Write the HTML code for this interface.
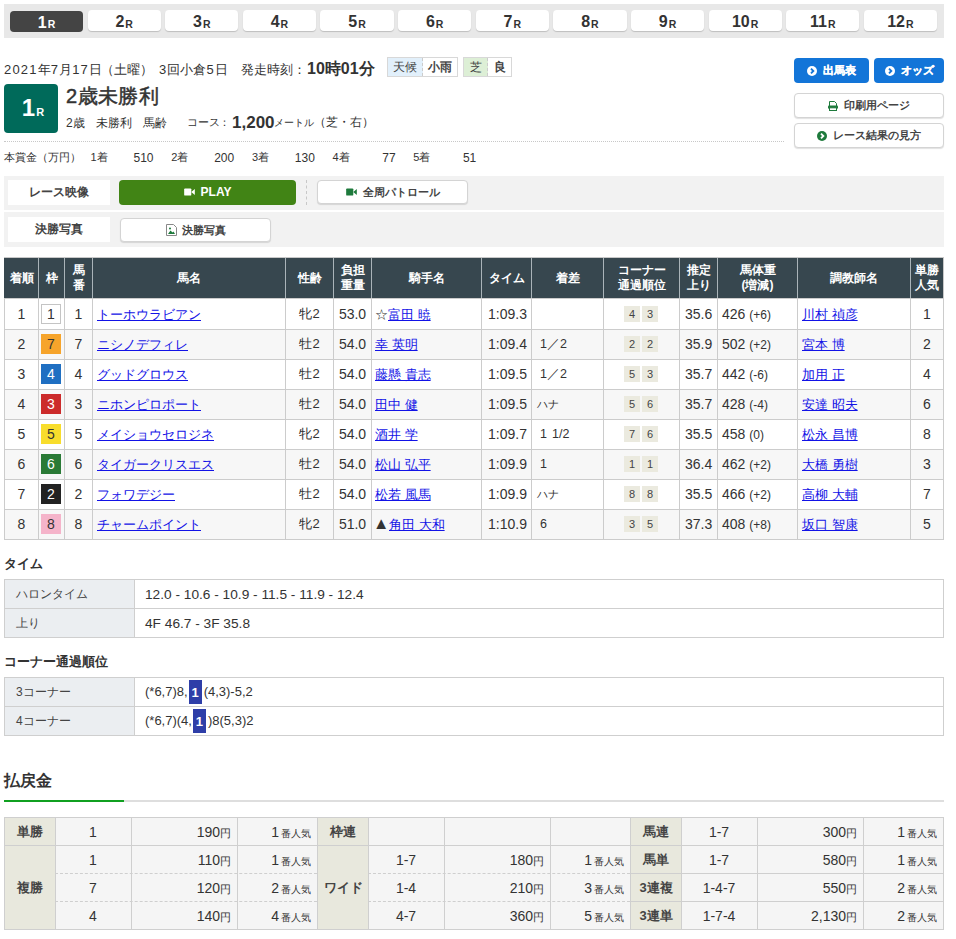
<!DOCTYPE html><html><head><meta charset="utf-8"><style>
*{box-sizing:border-box}
html,body{margin:0;padding:0}
body{width:956px;height:939px;position:relative;overflow:hidden;background:#fff;font-family:"Liberation Sans",sans-serif;color:#333;font-size:13px}
.a{position:absolute}
.t{white-space:nowrap;line-height:1}
.c{display:flex;align-items:center;justify-content:center;white-space:nowrap}
a{color:#1a0dab}
</style></head><body><div class="a" style="left:4px;top:4px;width:940px;height:34px;background:#e8e8e8"></div>
<div class="a" style="left:10.0px;top:11px;width:73.2px;height:21px;background:#444;color:#fff;border-radius:4px;font-weight:bold"><div class="c" style="height:21px;padding-top:2px"><span style="font-size:16px">1</span><span style="font-size:10.5px;margin-left:1px;padding-top:3px">R</span></div></div>
<div class="a" style="left:87.62px;top:10px;width:73.2px;height:21px;background:#fff;color:#333;border-radius:4px;box-shadow:0 1px 1px rgba(0,0,0,.18);font-weight:bold"><div class="c" style="height:21px;padding-top:3px"><span style="font-size:16px">2</span><span style="font-size:10.5px;margin-left:1px;padding-top:3px">R</span></div></div>
<div class="a" style="left:165.24px;top:10px;width:73.2px;height:21px;background:#fff;color:#333;border-radius:4px;box-shadow:0 1px 1px rgba(0,0,0,.18);font-weight:bold"><div class="c" style="height:21px;padding-top:3px"><span style="font-size:16px">3</span><span style="font-size:10.5px;margin-left:1px;padding-top:3px">R</span></div></div>
<div class="a" style="left:242.85px;top:10px;width:73.2px;height:21px;background:#fff;color:#333;border-radius:4px;box-shadow:0 1px 1px rgba(0,0,0,.18);font-weight:bold"><div class="c" style="height:21px;padding-top:3px"><span style="font-size:16px">4</span><span style="font-size:10.5px;margin-left:1px;padding-top:3px">R</span></div></div>
<div class="a" style="left:320.47px;top:10px;width:73.2px;height:21px;background:#fff;color:#333;border-radius:4px;box-shadow:0 1px 1px rgba(0,0,0,.18);font-weight:bold"><div class="c" style="height:21px;padding-top:3px"><span style="font-size:16px">5</span><span style="font-size:10.5px;margin-left:1px;padding-top:3px">R</span></div></div>
<div class="a" style="left:398.09px;top:10px;width:73.2px;height:21px;background:#fff;color:#333;border-radius:4px;box-shadow:0 1px 1px rgba(0,0,0,.18);font-weight:bold"><div class="c" style="height:21px;padding-top:3px"><span style="font-size:16px">6</span><span style="font-size:10.5px;margin-left:1px;padding-top:3px">R</span></div></div>
<div class="a" style="left:475.71px;top:10px;width:73.2px;height:21px;background:#fff;color:#333;border-radius:4px;box-shadow:0 1px 1px rgba(0,0,0,.18);font-weight:bold"><div class="c" style="height:21px;padding-top:3px"><span style="font-size:16px">7</span><span style="font-size:10.5px;margin-left:1px;padding-top:3px">R</span></div></div>
<div class="a" style="left:553.33px;top:10px;width:73.2px;height:21px;background:#fff;color:#333;border-radius:4px;box-shadow:0 1px 1px rgba(0,0,0,.18);font-weight:bold"><div class="c" style="height:21px;padding-top:3px"><span style="font-size:16px">8</span><span style="font-size:10.5px;margin-left:1px;padding-top:3px">R</span></div></div>
<div class="a" style="left:630.95px;top:10px;width:73.2px;height:21px;background:#fff;color:#333;border-radius:4px;box-shadow:0 1px 1px rgba(0,0,0,.18);font-weight:bold"><div class="c" style="height:21px;padding-top:3px"><span style="font-size:16px">9</span><span style="font-size:10.5px;margin-left:1px;padding-top:3px">R</span></div></div>
<div class="a" style="left:708.56px;top:10px;width:73.2px;height:21px;background:#fff;color:#333;border-radius:4px;box-shadow:0 1px 1px rgba(0,0,0,.18);font-weight:bold"><div class="c" style="height:21px;padding-top:3px"><span style="font-size:16px">10</span><span style="font-size:10.5px;margin-left:1px;padding-top:3px">R</span></div></div>
<div class="a" style="left:786.18px;top:10px;width:73.2px;height:21px;background:#fff;color:#333;border-radius:4px;box-shadow:0 1px 1px rgba(0,0,0,.18);font-weight:bold"><div class="c" style="height:21px;padding-top:3px"><span style="font-size:16px">11</span><span style="font-size:10.5px;margin-left:1px;padding-top:3px">R</span></div></div>
<div class="a" style="left:863.8px;top:10px;width:73.2px;height:21px;background:#fff;color:#333;border-radius:4px;box-shadow:0 1px 1px rgba(0,0,0,.18);font-weight:bold"><div class="c" style="height:21px;padding-top:3px"><span style="font-size:16px">12</span><span style="font-size:10.5px;margin-left:1px;padding-top:3px">R</span></div></div>
<div class="a t" style="left:4px;top:63px;font-size:13px"><span style="letter-spacing:1.2px">2021</span>年<span style="letter-spacing:1.2px">7</span>月<span style="letter-spacing:1.2px">17</span>日</div>
<div class="a t" style="left:101.3px;top:63px;font-size:13px">（土曜）</div>
<div class="a t" style="left:159px;top:63px;font-size:13px"><span style="letter-spacing:1.2px">3</span>回小倉<span style="letter-spacing:1.2px">5</span>日</div>
<div class="a t" style="left:241px;top:63px;font-size:13px">発走時刻：</div>
<div class="a t" style="left:307px;top:61px;font-size:16px;font-weight:bold">10時01分</div>
<div class="a" style="left:387px;top:57px;width:71px;height:20px;border:1px solid #d8d8d8;background:#fff"></div>
<div class="a" style="left:388px;top:58px;width:35px;height:18px;background:#e2f0fb;border-right:1px dashed #ccc"><div class="c" style="height:18px;font-size:12px;color:#444;padding-top:1px">天候</div></div>
<div class="a" style="left:423px;top:58px;width:34px;height:18px;"><div class="c" style="height:18px;font-size:12px;-webkit-text-stroke:0.4px #333;color:#333;padding-top:1px">小雨</div></div>
<div class="a" style="left:463px;top:57px;width:49px;height:20px;border:1px solid #d8d8d8;background:#fff"></div>
<div class="a" style="left:464px;top:58px;width:24px;height:18px;background:#ddefd6;border-right:1px dashed #ccc"><div class="c" style="height:18px;font-size:12px;color:#444;padding-top:1px">芝</div></div>
<div class="a" style="left:488px;top:58px;width:23px;height:18px;"><div class="c" style="height:18px;font-size:12px;-webkit-text-stroke:0.4px #333;color:#333;padding-top:1px">良</div></div>
<div class="a" style="left:4px;top:84px;width:54px;height:49px;background:#006a5a;border-radius:4px;color:#fff;font-weight:bold"><div class="c" style="height:49px;padding-bottom:2px;padding-left:4px"><span style="font-size:24px">1</span><span style="font-size:11px;padding-top:8px;margin-left:1px">R</span></div></div>
<div class="a t" style="left:66px;top:86px;font-size:20px;font-weight:normal;-webkit-text-stroke:0.5px #333;color:#333;letter-spacing:0.4px">2歳未勝利</div>
<div class="a t" style="left:66px;top:117px;font-size:12px">2歳</div>
<div class="a t" style="left:95.5px;top:117px;font-size:12px">未勝利</div>
<div class="a t" style="left:142.5px;top:117px;font-size:12px">馬齢</div>
<div class="a t" style="left:187px;top:117px;font-size:11px">コース</div>
<div class="a t" style="left:218.5px;top:117px;font-size:11px">：</div>
<div class="a t" style="left:232px;top:114px;font-size:17px;font-weight:bold">1,200</div>
<div class="a t" style="left:274px;top:118px;font-size:10px">メートル</div>
<div class="a t" style="left:314px;top:116px;font-size:12px">（芝・右）</div>
<div class="a" style="left:4px;top:141px;width:780px;height:1px;border-top:1px dotted #c8c8c8"></div>
<div class="a t" style="left:4px;top:152px;font-size:11px">本賞金（万円）</div>
<div class="a t" style="left:90.5px;top:152px;font-size:11px">1着</div>
<div class="a t" style="left:90.5px;top:152px;width:63px;text-align:right;font-size:12px">510</div>
<div class="a t" style="left:171.2px;top:152px;font-size:11px">2着</div>
<div class="a t" style="left:171.2px;top:152px;width:63px;text-align:right;font-size:12px">200</div>
<div class="a t" style="left:251.9px;top:152px;font-size:11px">3着</div>
<div class="a t" style="left:251.9px;top:152px;width:63px;text-align:right;font-size:12px">130</div>
<div class="a t" style="left:332.6px;top:152px;font-size:11px">4着</div>
<div class="a t" style="left:332.6px;top:152px;width:63px;text-align:right;font-size:12px">77</div>
<div class="a t" style="left:413.3px;top:152px;font-size:11px">5着</div>
<div class="a t" style="left:413.3px;top:152px;width:63px;text-align:right;font-size:12px">51</div>
<div class="a" style="left:794px;top:58px;width:75px;height:25px;background:#1375d8;border-radius:4px;color:#fff;font-weight:bold"><div class="c" style="height:25px;font-size:11px;-webkit-text-stroke:0.3px #fff"><svg width="10" height="10" viewBox="0 0 12 12" style="margin-right:6px"><circle cx="6" cy="6" r="6" fill="#fff"/><path d="M4.8 3.2 L7.6 6 L4.8 8.8" stroke="#1375d8" stroke-width="2.2" fill="none"/></svg>出馬表</div></div>
<div class="a" style="left:874px;top:58px;width:70px;height:25px;background:#1375d8;border-radius:4px;color:#fff;font-weight:bold"><div class="c" style="height:25px;font-size:11px;-webkit-text-stroke:0.3px #fff"><svg width="10" height="10" viewBox="0 0 12 12" style="margin-right:6px"><circle cx="6" cy="6" r="6" fill="#fff"/><path d="M4.8 3.2 L7.6 6 L4.8 8.8" stroke="#1375d8" stroke-width="2.2" fill="none"/></svg>オッズ</div></div>
<div class="a" style="left:794px;top:93px;width:150px;height:25px;background:#fff;border:1px solid #d4d4d4;border-radius:4px;box-shadow:0 1px 1px rgba(0,0,0,.12);font-weight:bold;color:#444"><div class="c" style="height:23px;font-size:11px"><svg width="10" height="10" viewBox="0 0 10 10" style="margin-right:6px"><path d="M1.5 5 V0.5 H6.5 L8.5 2.5 V5" fill="#fff" stroke="#1e7a3c" stroke-width="1"/><rect x="0" y="4.5" width="10" height="3.2" rx="1" fill="#1e7a3c"/><rect x="1.5" y="6.8" width="7" height="2.7" fill="#fff" stroke="#1e7a3c" stroke-width="1"/></svg>印刷用ページ</div></div>
<div class="a" style="left:794px;top:123px;width:150px;height:25px;background:#fff;border:1px solid #d4d4d4;border-radius:4px;box-shadow:0 1px 1px rgba(0,0,0,.12);font-weight:bold;color:#444"><div class="c" style="height:23px;font-size:11px"><svg width="10" height="10" viewBox="0 0 12 12" style="margin-right:6px"><circle cx="6" cy="6" r="6" fill="#1e7a3c"/><path d="M4.8 3.2 L7.6 6 L4.8 8.8" stroke="#fff" stroke-width="2.2" fill="none"/></svg>レース結果の見方</div></div>
<div class="a" style="left:4px;top:176px;width:940px;height:34px;background:#f2f2f2"></div>
<div class="a" style="left:8px;top:180px;width:102px;height:25px;background:#fff"><div class="c" style="height:25px;font-size:12px;font-weight:bold;color:#444">レース映像</div></div>
<div class="a" style="left:119px;top:180px;width:177px;height:25px;background:#418415;border-radius:4px;color:#fff;font-weight:bold"><div class="c" style="height:25px;font-size:12px;padding-bottom:1px"><svg width="11" height="8" viewBox="0 0 12 9" style="margin-right:6px"><rect x="0" y="0.5" width="8" height="8" rx="1" fill="#fff"/><path d="M8 4.5 L12 1 L12 8 Z" fill="#fff"/></svg>PLAY</div></div>
<div class="a" style="left:306px;top:180px;width:1px;height:25px;border-left:1px dashed #c8c8c8"></div>
<div class="a" style="left:317px;top:180px;width:151px;height:24px;background:#fff;border:1px solid #d4d4d4;border-radius:4px;box-shadow:0 1px 1px rgba(0,0,0,.12);font-weight:bold;color:#444"><div class="c" style="height:22px;font-size:11px"><svg width="11" height="8" viewBox="0 0 12 9" style="margin-right:6px"><rect x="0" y="0.5" width="8" height="8" rx="1" fill="#1e7a3c"/><path d="M8 4.5 L12 1 L12 8 Z" fill="#1e7a3c"/></svg>全周パトロール</div></div>
<div class="a" style="left:4px;top:212px;width:940px;height:35px;background:#f2f2f2"></div>
<div class="a" style="left:8px;top:217px;width:102px;height:25px;background:#fff"><div class="c" style="height:25px;font-size:12px;font-weight:bold;color:#444">決勝写真</div></div>
<div class="a" style="left:120px;top:218px;width:151px;height:24px;background:#fff;border:1px solid #d4d4d4;border-radius:4px;box-shadow:0 1px 1px rgba(0,0,0,.12);font-weight:bold;color:#444"><div class="c" style="height:22px;font-size:11px"><svg width="11" height="12" viewBox="0 0 11 12" style="margin-right:5px"><path d="M0.5 0.5 H7.5 L10.5 3.5 V11.5 H0.5 Z" fill="#fff" stroke="#888" stroke-width="1"/><path d="M2 10 L4.5 6.5 L6.5 8.5 L7.5 7.5 L9 10 Z" fill="#1e7a3c"/><circle cx="4" cy="4.5" r="1" fill="#1e7a3c"/></svg>決勝写真</div></div>
<div class="a" style="left:4px;top:258px;width:940px;height:40px;background:#37474f"></div>
<div class="a" style="left:4px;top:257px;width:940px;height:1px;background:#c8c8c8"></div>
<div class="a" style="left:943px;top:258px;width:1px;height:40px;background:#c8c8c8"></div>
<div class="a c" style="left:5px;top:258px;width:33px;height:40px;color:#fff;font-weight:bold;font-size:12px;line-height:15px;text-align:center">着順</div>
<div class="a" style="left:38px;top:258px;width:1px;height:40px;background:#aab4b9"></div>
<div class="a c" style="left:39px;top:258px;width:25px;height:40px;color:#fff;font-weight:bold;font-size:12px;line-height:15px;text-align:center">枠</div>
<div class="a" style="left:64px;top:258px;width:1px;height:40px;background:#aab4b9"></div>
<div class="a c" style="left:65px;top:258px;width:27px;height:40px;color:#fff;font-weight:bold;font-size:12px;line-height:15px;text-align:center">馬<br>番</div>
<div class="a" style="left:92px;top:258px;width:1px;height:40px;background:#aab4b9"></div>
<div class="a c" style="left:93px;top:258px;width:192px;height:40px;color:#fff;font-weight:bold;font-size:12px;line-height:15px;text-align:center">馬名</div>
<div class="a" style="left:285px;top:258px;width:1px;height:40px;background:#aab4b9"></div>
<div class="a c" style="left:286px;top:258px;width:47px;height:40px;color:#fff;font-weight:bold;font-size:12px;line-height:15px;text-align:center">性齢</div>
<div class="a" style="left:333px;top:258px;width:1px;height:40px;background:#aab4b9"></div>
<div class="a c" style="left:334px;top:258px;width:37px;height:40px;color:#fff;font-weight:bold;font-size:12px;line-height:15px;text-align:center">負担<br>重量</div>
<div class="a" style="left:371px;top:258px;width:1px;height:40px;background:#aab4b9"></div>
<div class="a c" style="left:372px;top:258px;width:109px;height:40px;color:#fff;font-weight:bold;font-size:12px;line-height:15px;text-align:center">騎手名</div>
<div class="a" style="left:481px;top:258px;width:1px;height:40px;background:#aab4b9"></div>
<div class="a c" style="left:482px;top:258px;width:49px;height:40px;color:#fff;font-weight:bold;font-size:12px;line-height:15px;text-align:center">タイム</div>
<div class="a" style="left:531px;top:258px;width:1px;height:40px;background:#aab4b9"></div>
<div class="a c" style="left:532px;top:258px;width:71px;height:40px;color:#fff;font-weight:bold;font-size:12px;line-height:15px;text-align:center">着差</div>
<div class="a" style="left:603px;top:258px;width:1px;height:40px;background:#aab4b9"></div>
<div class="a c" style="left:604px;top:258px;width:75px;height:40px;color:#fff;font-weight:bold;font-size:12px;line-height:15px;text-align:center">コーナー<br>通過順位</div>
<div class="a" style="left:679px;top:258px;width:1px;height:40px;background:#aab4b9"></div>
<div class="a c" style="left:680px;top:258px;width:37px;height:40px;color:#fff;font-weight:bold;font-size:12px;line-height:15px;text-align:center">推定<br>上り</div>
<div class="a" style="left:717px;top:258px;width:1px;height:40px;background:#aab4b9"></div>
<div class="a c" style="left:718px;top:258px;width:79px;height:40px;color:#fff;font-weight:bold;font-size:12px;line-height:15px;text-align:center">馬体重<br>(増減)</div>
<div class="a" style="left:797px;top:258px;width:1px;height:40px;background:#aab4b9"></div>
<div class="a c" style="left:798px;top:258px;width:112px;height:40px;color:#fff;font-weight:bold;font-size:12px;line-height:15px;text-align:center">調教師名</div>
<div class="a" style="left:910px;top:258px;width:1px;height:40px;background:#aab4b9"></div>
<div class="a c" style="left:911px;top:258px;width:32px;height:40px;color:#fff;font-weight:bold;font-size:12px;line-height:15px;text-align:center">単勝<br>人気</div>
<div class="a" style="left:4px;top:299px;width:940px;height:30px;background:#fff"></div>
<div class="a" style="left:4px;top:330px;width:940px;height:29px;background:#f7f7f7"></div>
<div class="a" style="left:4px;top:360px;width:940px;height:29px;background:#fff"></div>
<div class="a" style="left:4px;top:390px;width:940px;height:29px;background:#f7f7f7"></div>
<div class="a" style="left:4px;top:420px;width:940px;height:29px;background:#fff"></div>
<div class="a" style="left:4px;top:450px;width:940px;height:29px;background:#f7f7f7"></div>
<div class="a" style="left:4px;top:480px;width:940px;height:29px;background:#fff"></div>
<div class="a" style="left:4px;top:510px;width:940px;height:29px;background:#f7f7f7"></div>
<div class="a" style="left:4px;top:298px;width:940px;height:1px;background:#cccccc"></div>
<div class="a" style="left:4px;top:329px;width:940px;height:1px;background:#cccccc"></div>
<div class="a" style="left:4px;top:359px;width:940px;height:1px;background:#cccccc"></div>
<div class="a" style="left:4px;top:389px;width:940px;height:1px;background:#cccccc"></div>
<div class="a" style="left:4px;top:419px;width:940px;height:1px;background:#cccccc"></div>
<div class="a" style="left:4px;top:449px;width:940px;height:1px;background:#cccccc"></div>
<div class="a" style="left:4px;top:479px;width:940px;height:1px;background:#cccccc"></div>
<div class="a" style="left:4px;top:509px;width:940px;height:1px;background:#cccccc"></div>
<div class="a" style="left:4px;top:539px;width:940px;height:1px;background:#cccccc"></div>
<div class="a" style="left:4px;top:298px;width:1px;height:242px;background:#cccccc"></div>
<div class="a" style="left:38px;top:298px;width:1px;height:242px;background:#cccccc"></div>
<div class="a" style="left:64px;top:298px;width:1px;height:242px;background:#cccccc"></div>
<div class="a" style="left:92px;top:298px;width:1px;height:242px;background:#cccccc"></div>
<div class="a" style="left:285px;top:298px;width:1px;height:242px;background:#cccccc"></div>
<div class="a" style="left:333px;top:298px;width:1px;height:242px;background:#cccccc"></div>
<div class="a" style="left:371px;top:298px;width:1px;height:242px;background:#cccccc"></div>
<div class="a" style="left:481px;top:298px;width:1px;height:242px;background:#cccccc"></div>
<div class="a" style="left:531px;top:298px;width:1px;height:242px;background:#cccccc"></div>
<div class="a" style="left:603px;top:298px;width:1px;height:242px;background:#cccccc"></div>
<div class="a" style="left:679px;top:298px;width:1px;height:242px;background:#cccccc"></div>
<div class="a" style="left:717px;top:298px;width:1px;height:242px;background:#cccccc"></div>
<div class="a" style="left:797px;top:298px;width:1px;height:242px;background:#cccccc"></div>
<div class="a" style="left:910px;top:298px;width:1px;height:242px;background:#cccccc"></div>
<div class="a" style="left:943px;top:298px;width:1px;height:242px;background:#cccccc"></div>
<div class="a t" style="left:5px;top:307px;width:33px;text-align:center;font-size:14px;">1</div>
<div class="a" style="left:41px;top:304px;width:20px;height:20px;background:#fff;border:1px solid #c4c4c4"><div class="c" style="height:18px;font-size:14px;color:#333">1</div></div>
<div class="a t" style="left:65px;top:307px;width:27px;text-align:center;font-size:14px;">1</div>
<div class="a t" style="left:97px;top:308px;font-size:13px"><a style="color:#1212e6;text-decoration:underline">トーホウラビアン</a></div>
<div class="a t" style="left:286px;top:307px;width:47px;text-align:center;font-size:14px;font-size:13px">牝2</div>
<div class="a t" style="left:334px;top:307px;width:37px;text-align:center;font-size:14px;">53.0</div>
<div class="a t" style="left:375px;top:308px;font-size:13px">☆<a style="color:#1212e6;text-decoration:underline">富田 暁</a></div>
<div class="a t" style="left:488px;top:307px;font-size:14px">1:09.3</div>
<div class="a t" style="left:540px;top:308px;font-size:12.5px"></div>
<div class="a" style="left:624px;top:306px;width:16px;height:16px;background:#ebeadf"><div class="c" style="height:16px;font-size:11px;color:#444">4</div></div>
<div class="a" style="left:642px;top:306px;width:16px;height:16px;background:#ebeadf"><div class="c" style="height:16px;font-size:11px;color:#444">3</div></div>
<div class="a t" style="left:685px;top:307px;font-size:14px">35.6</div>
<div class="a t" style="left:722px;top:307px;font-size:14px">426 <span style="font-size:12px">(+6)</span></div>
<div class="a t" style="left:802px;top:308px;font-size:13px"><a style="color:#1212e6;text-decoration:underline">川村 禎彦</a></div>
<div class="a t" style="left:911px;top:307px;width:32px;text-align:center;font-size:14px;">1</div>
<div class="a t" style="left:5px;top:337px;width:33px;text-align:center;font-size:14px;">2</div>
<div class="a" style="left:41px;top:334px;width:20px;height:20px;background:#f6a42b;border:none"><div class="c" style="height:20px;font-size:14px;color:#333">7</div></div>
<div class="a t" style="left:65px;top:337px;width:27px;text-align:center;font-size:14px;">7</div>
<div class="a t" style="left:97px;top:338px;font-size:13px"><a style="color:#1212e6;text-decoration:underline">ニシノデフィレ</a></div>
<div class="a t" style="left:286px;top:337px;width:47px;text-align:center;font-size:14px;font-size:13px">牡2</div>
<div class="a t" style="left:334px;top:337px;width:37px;text-align:center;font-size:14px;">54.0</div>
<div class="a t" style="left:375px;top:338px;font-size:13px"><a style="color:#1212e6;text-decoration:underline">幸 英明</a></div>
<div class="a t" style="left:488px;top:337px;font-size:14px">1:09.4</div>
<div class="a t" style="left:540px;top:338px;font-size:12.5px">1／2</div>
<div class="a" style="left:624px;top:336px;width:16px;height:16px;background:#ebeadf"><div class="c" style="height:16px;font-size:11px;color:#444">2</div></div>
<div class="a" style="left:642px;top:336px;width:16px;height:16px;background:#ebeadf"><div class="c" style="height:16px;font-size:11px;color:#444">2</div></div>
<div class="a t" style="left:685px;top:337px;font-size:14px">35.9</div>
<div class="a t" style="left:722px;top:337px;font-size:14px">502 <span style="font-size:12px">(+2)</span></div>
<div class="a t" style="left:802px;top:338px;font-size:13px"><a style="color:#1212e6;text-decoration:underline">宮本 博</a></div>
<div class="a t" style="left:911px;top:337px;width:32px;text-align:center;font-size:14px;">2</div>
<div class="a t" style="left:5px;top:367px;width:33px;text-align:center;font-size:14px;">3</div>
<div class="a" style="left:41px;top:364px;width:20px;height:20px;background:#1f6fc2;border:none"><div class="c" style="height:20px;font-size:14px;color:#fff">4</div></div>
<div class="a t" style="left:65px;top:367px;width:27px;text-align:center;font-size:14px;">4</div>
<div class="a t" style="left:97px;top:368px;font-size:13px"><a style="color:#1212e6;text-decoration:underline">グッドグロウス</a></div>
<div class="a t" style="left:286px;top:367px;width:47px;text-align:center;font-size:14px;font-size:13px">牡2</div>
<div class="a t" style="left:334px;top:367px;width:37px;text-align:center;font-size:14px;">54.0</div>
<div class="a t" style="left:375px;top:368px;font-size:13px"><a style="color:#1212e6;text-decoration:underline">藤懸 貴志</a></div>
<div class="a t" style="left:488px;top:367px;font-size:14px">1:09.5</div>
<div class="a t" style="left:540px;top:368px;font-size:12.5px">1／2</div>
<div class="a" style="left:624px;top:366px;width:16px;height:16px;background:#ebeadf"><div class="c" style="height:16px;font-size:11px;color:#444">5</div></div>
<div class="a" style="left:642px;top:366px;width:16px;height:16px;background:#ebeadf"><div class="c" style="height:16px;font-size:11px;color:#444">3</div></div>
<div class="a t" style="left:685px;top:367px;font-size:14px">35.7</div>
<div class="a t" style="left:722px;top:367px;font-size:14px">442 <span style="font-size:12px">(-6)</span></div>
<div class="a t" style="left:802px;top:368px;font-size:13px"><a style="color:#1212e6;text-decoration:underline">加用 正</a></div>
<div class="a t" style="left:911px;top:367px;width:32px;text-align:center;font-size:14px;">4</div>
<div class="a t" style="left:5px;top:397px;width:33px;text-align:center;font-size:14px;">4</div>
<div class="a" style="left:41px;top:394px;width:20px;height:20px;background:#cc2b2b;border:none"><div class="c" style="height:20px;font-size:14px;color:#fff">3</div></div>
<div class="a t" style="left:65px;top:397px;width:27px;text-align:center;font-size:14px;">3</div>
<div class="a t" style="left:97px;top:398px;font-size:13px"><a style="color:#1212e6;text-decoration:underline">ニホンピロポート</a></div>
<div class="a t" style="left:286px;top:397px;width:47px;text-align:center;font-size:14px;font-size:13px">牡2</div>
<div class="a t" style="left:334px;top:397px;width:37px;text-align:center;font-size:14px;">54.0</div>
<div class="a t" style="left:375px;top:398px;font-size:13px"><a style="color:#1212e6;text-decoration:underline">田中 健</a></div>
<div class="a t" style="left:488px;top:397px;font-size:14px">1:09.5</div>
<div class="a t" style="left:540px;top:398px;font-size:12.5px"><span style="font-size:11px;margin-left:-3px">ハナ</span></div>
<div class="a" style="left:624px;top:396px;width:16px;height:16px;background:#ebeadf"><div class="c" style="height:16px;font-size:11px;color:#444">5</div></div>
<div class="a" style="left:642px;top:396px;width:16px;height:16px;background:#ebeadf"><div class="c" style="height:16px;font-size:11px;color:#444">6</div></div>
<div class="a t" style="left:685px;top:397px;font-size:14px">35.7</div>
<div class="a t" style="left:722px;top:397px;font-size:14px">428 <span style="font-size:12px">(-4)</span></div>
<div class="a t" style="left:802px;top:398px;font-size:13px"><a style="color:#1212e6;text-decoration:underline">安達 昭夫</a></div>
<div class="a t" style="left:911px;top:397px;width:32px;text-align:center;font-size:14px;">6</div>
<div class="a t" style="left:5px;top:427px;width:33px;text-align:center;font-size:14px;">5</div>
<div class="a" style="left:41px;top:424px;width:20px;height:20px;background:#f8dd2c;border:none"><div class="c" style="height:20px;font-size:14px;color:#333">5</div></div>
<div class="a t" style="left:65px;top:427px;width:27px;text-align:center;font-size:14px;">5</div>
<div class="a t" style="left:97px;top:428px;font-size:13px"><a style="color:#1212e6;text-decoration:underline">メイショウセロジネ</a></div>
<div class="a t" style="left:286px;top:427px;width:47px;text-align:center;font-size:14px;font-size:13px">牝2</div>
<div class="a t" style="left:334px;top:427px;width:37px;text-align:center;font-size:14px;">54.0</div>
<div class="a t" style="left:375px;top:428px;font-size:13px"><a style="color:#1212e6;text-decoration:underline">酒井 学</a></div>
<div class="a t" style="left:488px;top:427px;font-size:14px">1:09.7</div>
<div class="a t" style="left:540px;top:428px;font-size:12.5px">1<span style="margin-left:5px">1/2</span></div>
<div class="a" style="left:624px;top:426px;width:16px;height:16px;background:#ebeadf"><div class="c" style="height:16px;font-size:11px;color:#444">7</div></div>
<div class="a" style="left:642px;top:426px;width:16px;height:16px;background:#ebeadf"><div class="c" style="height:16px;font-size:11px;color:#444">6</div></div>
<div class="a t" style="left:685px;top:427px;font-size:14px">35.5</div>
<div class="a t" style="left:722px;top:427px;font-size:14px">458 <span style="font-size:12px">(0)</span></div>
<div class="a t" style="left:802px;top:428px;font-size:13px"><a style="color:#1212e6;text-decoration:underline">松永 昌博</a></div>
<div class="a t" style="left:911px;top:427px;width:32px;text-align:center;font-size:14px;">8</div>
<div class="a t" style="left:5px;top:457px;width:33px;text-align:center;font-size:14px;">6</div>
<div class="a" style="left:41px;top:454px;width:20px;height:20px;background:#2a7a36;border:none"><div class="c" style="height:20px;font-size:14px;color:#fff">6</div></div>
<div class="a t" style="left:65px;top:457px;width:27px;text-align:center;font-size:14px;">6</div>
<div class="a t" style="left:97px;top:458px;font-size:13px"><a style="color:#1212e6;text-decoration:underline">タイガークリスエス</a></div>
<div class="a t" style="left:286px;top:457px;width:47px;text-align:center;font-size:14px;font-size:13px">牡2</div>
<div class="a t" style="left:334px;top:457px;width:37px;text-align:center;font-size:14px;">54.0</div>
<div class="a t" style="left:375px;top:458px;font-size:13px"><a style="color:#1212e6;text-decoration:underline">松山 弘平</a></div>
<div class="a t" style="left:488px;top:457px;font-size:14px">1:09.9</div>
<div class="a t" style="left:540px;top:458px;font-size:12.5px">1</div>
<div class="a" style="left:624px;top:456px;width:16px;height:16px;background:#ebeadf"><div class="c" style="height:16px;font-size:11px;color:#444">1</div></div>
<div class="a" style="left:642px;top:456px;width:16px;height:16px;background:#ebeadf"><div class="c" style="height:16px;font-size:11px;color:#444">1</div></div>
<div class="a t" style="left:685px;top:457px;font-size:14px">36.4</div>
<div class="a t" style="left:722px;top:457px;font-size:14px">462 <span style="font-size:12px">(+2)</span></div>
<div class="a t" style="left:802px;top:458px;font-size:13px"><a style="color:#1212e6;text-decoration:underline">大橋 勇樹</a></div>
<div class="a t" style="left:911px;top:457px;width:32px;text-align:center;font-size:14px;">3</div>
<div class="a t" style="left:5px;top:487px;width:33px;text-align:center;font-size:14px;">7</div>
<div class="a" style="left:41px;top:484px;width:20px;height:20px;background:#222;border:none"><div class="c" style="height:20px;font-size:14px;color:#fff">2</div></div>
<div class="a t" style="left:65px;top:487px;width:27px;text-align:center;font-size:14px;">2</div>
<div class="a t" style="left:97px;top:488px;font-size:13px"><a style="color:#1212e6;text-decoration:underline">フォワデジー</a></div>
<div class="a t" style="left:286px;top:487px;width:47px;text-align:center;font-size:14px;font-size:13px">牡2</div>
<div class="a t" style="left:334px;top:487px;width:37px;text-align:center;font-size:14px;">54.0</div>
<div class="a t" style="left:375px;top:488px;font-size:13px"><a style="color:#1212e6;text-decoration:underline">松若 風馬</a></div>
<div class="a t" style="left:488px;top:487px;font-size:14px">1:09.9</div>
<div class="a t" style="left:540px;top:488px;font-size:12.5px"><span style="font-size:11px;margin-left:-3px">ハナ</span></div>
<div class="a" style="left:624px;top:486px;width:16px;height:16px;background:#ebeadf"><div class="c" style="height:16px;font-size:11px;color:#444">8</div></div>
<div class="a" style="left:642px;top:486px;width:16px;height:16px;background:#ebeadf"><div class="c" style="height:16px;font-size:11px;color:#444">8</div></div>
<div class="a t" style="left:685px;top:487px;font-size:14px">35.5</div>
<div class="a t" style="left:722px;top:487px;font-size:14px">466 <span style="font-size:12px">(+2)</span></div>
<div class="a t" style="left:802px;top:488px;font-size:13px"><a style="color:#1212e6;text-decoration:underline">高柳 大輔</a></div>
<div class="a t" style="left:911px;top:487px;width:32px;text-align:center;font-size:14px;">7</div>
<div class="a t" style="left:5px;top:517px;width:33px;text-align:center;font-size:14px;">8</div>
<div class="a" style="left:41px;top:514px;width:20px;height:20px;background:#f5b4ca;border:none"><div class="c" style="height:20px;font-size:14px;color:#333">8</div></div>
<div class="a t" style="left:65px;top:517px;width:27px;text-align:center;font-size:14px;">8</div>
<div class="a t" style="left:97px;top:518px;font-size:13px"><a style="color:#1212e6;text-decoration:underline">チャームポイント</a></div>
<div class="a t" style="left:286px;top:517px;width:47px;text-align:center;font-size:14px;font-size:13px">牝2</div>
<div class="a t" style="left:334px;top:517px;width:37px;text-align:center;font-size:14px;">51.0</div>
<div class="a t" style="left:373px;top:517px;font-size:16.5px;line-height:13px">▲</div>
<div class="a t" style="left:389px;top:518px;font-size:13px"><a style="color:#1212e6;text-decoration:underline">角田 大和</a></div>
<div class="a t" style="left:488px;top:517px;font-size:14px">1:10.9</div>
<div class="a t" style="left:540px;top:518px;font-size:12.5px">6</div>
<div class="a" style="left:624px;top:516px;width:16px;height:16px;background:#ebeadf"><div class="c" style="height:16px;font-size:11px;color:#444">3</div></div>
<div class="a" style="left:642px;top:516px;width:16px;height:16px;background:#ebeadf"><div class="c" style="height:16px;font-size:11px;color:#444">5</div></div>
<div class="a t" style="left:685px;top:517px;font-size:14px">37.3</div>
<div class="a t" style="left:722px;top:517px;font-size:14px">408 <span style="font-size:12px">(+8)</span></div>
<div class="a t" style="left:802px;top:518px;font-size:13px"><a style="color:#1212e6;text-decoration:underline">坂口 智康</a></div>
<div class="a t" style="left:911px;top:517px;width:32px;text-align:center;font-size:14px;">5</div>
<div class="a t" style="left:4px;top:557px;font-size:13px;font-weight:bold">タイム</div>
<div class="a" style="left:4px;top:579px;width:940px;height:30px;border:1px solid #cfcfcf;background:#fff"></div>
<div class="a" style="left:4px;top:579px;width:131px;height:30px;border:1px solid #cfcfcf;background:#ebeef1"></div>
<div class="a t" style="left:16px;top:588px;font-size:12px;color:#444">ハロンタイム</div>
<div class="a t" style="left:145px;top:588px;font-size:13.7px">12.0 - 10.6 - 10.9 - 11.5 - 11.9 - 12.4</div>
<div class="a" style="left:4px;top:608px;width:940px;height:30px;border:1px solid #cfcfcf;background:#fff"></div>
<div class="a" style="left:4px;top:608px;width:131px;height:30px;border:1px solid #cfcfcf;background:#ebeef1"></div>
<div class="a t" style="left:16px;top:617px;font-size:12px;color:#444">上り</div>
<div class="a t" style="left:145px;top:617px;font-size:13.7px">4F 46.7 - 3F 35.8</div>
<div class="a t" style="left:4px;top:655px;font-size:13px;font-weight:bold">コーナー通過順位</div>
<div class="a" style="left:4px;top:677px;width:940px;height:30px;border:1px solid #cfcfcf;background:#fff"></div>
<div class="a" style="left:4px;top:677px;width:131px;height:30px;border:1px solid #cfcfcf;background:#ebeef1"></div>
<div class="a t" style="left:16px;top:686px;font-size:12px;color:#444">3コーナー</div>
<div class="a" style="left:145px;top:677px;height:29px;display:flex;align-items:center;white-space:nowrap;font-size:13px"><span>(*6,7)8,</span><span style="display:block;width:13px;height:24px;line-height:25px;margin:0 2px 0 1px;background:#2e3ea8;color:#fff;font-weight:bold;text-align:center">1</span><span>(4,3)-5,2</span></div>
<div class="a" style="left:4px;top:706px;width:940px;height:30px;border:1px solid #cfcfcf;background:#fff"></div>
<div class="a" style="left:4px;top:706px;width:131px;height:30px;border:1px solid #cfcfcf;background:#ebeef1"></div>
<div class="a t" style="left:16px;top:715px;font-size:12px;color:#444">4コーナー</div>
<div class="a" style="left:145px;top:706px;height:29px;display:flex;align-items:center;white-space:nowrap;font-size:13px"><span>(*6,7)(4,</span><span style="display:block;width:13px;height:24px;line-height:25px;margin:0 2px 0 1px;background:#2e3ea8;color:#fff;font-weight:bold;text-align:center">1</span><span>)8(5,3)2</span></div>
<div class="a t" style="left:4px;top:773px;font-size:16px;font-weight:bold">払戻金</div>
<div class="a" style="left:4px;top:800px;width:940px;height:2px;background:#dedede"></div>
<div class="a" style="left:4px;top:800px;width:120px;height:2px;background:#10a020"></div>
<div class="a" style="left:4px;top:817px;width:940px;height:113px;background:#f5f5f5;border:1px solid #cfcfcf"></div>
<div class="a" style="left:4px;top:817px;width:52px;height:29px;background:#e8e8dd;border:1px solid #cfcfcf"><div class="c" style="height:27px;width:50px;font-size:13px;font-weight:bold;color:#444">単勝</div></div>
<div class="a" style="left:55px;top:817px;width:1px;height:29px;background:#cfcfcf"></div>
<div class="a" style="left:131px;top:817px;width:1px;height:29px;background:#cfcfcf"></div>
<div class="a" style="left:237px;top:817px;width:1px;height:29px;background:#cfcfcf"></div>
<div class="a" style="left:317px;top:817px;width:1px;height:29px;background:#cfcfcf"></div>
<div class="a t" style="left:55px;top:825px;width:76px;text-align:center;font-size:14px">1</div>
<div class="a t" style="left:131px;top:825px;width:100px;text-align:right;font-size:14px">190<span style="font-size:11px">円</span></div>
<div class="a t" style="left:237px;top:825px;width:74px;text-align:right;font-size:14px">1<span style="font-size:10px;margin-left:2px">番人気</span></div>
<div class="a" style="left:4px;top:845px;width:313px;height:1px;background:#cfcfcf"></div>
<div class="a" style="left:4px;top:845px;width:52px;height:85px;background:#e8e8dd;border:1px solid #cfcfcf"><div class="c" style="height:83px;width:50px;font-size:13px;font-weight:bold;color:#444">複勝</div></div>
<div class="a" style="left:55px;top:845px;width:1px;height:85px;background:#cfcfcf"></div>
<div class="a" style="left:131px;top:845px;width:1px;height:85px;background:#cfcfcf"></div>
<div class="a" style="left:237px;top:845px;width:1px;height:85px;background:#cfcfcf"></div>
<div class="a" style="left:317px;top:845px;width:1px;height:85px;background:#cfcfcf"></div>
<div class="a t" style="left:55px;top:853px;width:76px;text-align:center;font-size:14px">1</div>
<div class="a t" style="left:131px;top:853px;width:100px;text-align:right;font-size:14px">110<span style="font-size:11px">円</span></div>
<div class="a t" style="left:237px;top:853px;width:74px;text-align:right;font-size:14px">1<span style="font-size:10px;margin-left:2px">番人気</span></div>
<div class="a" style="left:55px;top:873px;width:262px;height:1px;border-top:1px dashed #cfcfcf"></div>
<div class="a" style="left:55px;top:845px;width:1px;height:85px;background:#cfcfcf"></div>
<div class="a" style="left:131px;top:845px;width:1px;height:85px;background:#cfcfcf"></div>
<div class="a" style="left:237px;top:845px;width:1px;height:85px;background:#cfcfcf"></div>
<div class="a" style="left:317px;top:845px;width:1px;height:85px;background:#cfcfcf"></div>
<div class="a t" style="left:55px;top:881px;width:76px;text-align:center;font-size:14px">7</div>
<div class="a t" style="left:131px;top:881px;width:100px;text-align:right;font-size:14px">120<span style="font-size:11px">円</span></div>
<div class="a t" style="left:237px;top:881px;width:74px;text-align:right;font-size:14px">2<span style="font-size:10px;margin-left:2px">番人気</span></div>
<div class="a" style="left:55px;top:901px;width:262px;height:1px;border-top:1px dashed #cfcfcf"></div>
<div class="a" style="left:55px;top:845px;width:1px;height:85px;background:#cfcfcf"></div>
<div class="a" style="left:131px;top:845px;width:1px;height:85px;background:#cfcfcf"></div>
<div class="a" style="left:237px;top:845px;width:1px;height:85px;background:#cfcfcf"></div>
<div class="a" style="left:317px;top:845px;width:1px;height:85px;background:#cfcfcf"></div>
<div class="a t" style="left:55px;top:909px;width:76px;text-align:center;font-size:14px">4</div>
<div class="a t" style="left:131px;top:909px;width:100px;text-align:right;font-size:14px">140<span style="font-size:11px">円</span></div>
<div class="a t" style="left:237px;top:909px;width:74px;text-align:right;font-size:14px">4<span style="font-size:10px;margin-left:2px">番人気</span></div>
<div class="a" style="left:4px;top:929px;width:313px;height:1px;background:#cfcfcf"></div>
<div class="a" style="left:317px;top:817px;width:52px;height:29px;background:#e8e8dd;border:1px solid #cfcfcf"><div class="c" style="height:27px;width:50px;font-size:13px;font-weight:bold;color:#444">枠連</div></div>
<div class="a" style="left:368px;top:817px;width:1px;height:29px;background:#cfcfcf"></div>
<div class="a" style="left:444px;top:817px;width:1px;height:29px;background:#cfcfcf"></div>
<div class="a" style="left:550px;top:817px;width:1px;height:29px;background:#cfcfcf"></div>
<div class="a" style="left:630px;top:817px;width:1px;height:29px;background:#cfcfcf"></div>
<div class="a t" style="left:368px;top:825px;width:76px;text-align:center;font-size:14px"></div>
<div class="a" style="left:317px;top:845px;width:313px;height:1px;background:#cfcfcf"></div>
<div class="a" style="left:317px;top:845px;width:52px;height:85px;background:#e8e8dd;border:1px solid #cfcfcf"><div class="c" style="height:83px;width:50px;font-size:13px;font-weight:bold;color:#444">ワイド</div></div>
<div class="a" style="left:368px;top:845px;width:1px;height:85px;background:#cfcfcf"></div>
<div class="a" style="left:444px;top:845px;width:1px;height:85px;background:#cfcfcf"></div>
<div class="a" style="left:550px;top:845px;width:1px;height:85px;background:#cfcfcf"></div>
<div class="a" style="left:630px;top:845px;width:1px;height:85px;background:#cfcfcf"></div>
<div class="a t" style="left:368px;top:853px;width:76px;text-align:center;font-size:14px">1-7</div>
<div class="a t" style="left:444px;top:853px;width:100px;text-align:right;font-size:14px">180<span style="font-size:11px">円</span></div>
<div class="a t" style="left:550px;top:853px;width:74px;text-align:right;font-size:14px">1<span style="font-size:10px;margin-left:2px">番人気</span></div>
<div class="a" style="left:368px;top:873px;width:262px;height:1px;border-top:1px dashed #cfcfcf"></div>
<div class="a" style="left:368px;top:845px;width:1px;height:85px;background:#cfcfcf"></div>
<div class="a" style="left:444px;top:845px;width:1px;height:85px;background:#cfcfcf"></div>
<div class="a" style="left:550px;top:845px;width:1px;height:85px;background:#cfcfcf"></div>
<div class="a" style="left:630px;top:845px;width:1px;height:85px;background:#cfcfcf"></div>
<div class="a t" style="left:368px;top:881px;width:76px;text-align:center;font-size:14px">1-4</div>
<div class="a t" style="left:444px;top:881px;width:100px;text-align:right;font-size:14px">210<span style="font-size:11px">円</span></div>
<div class="a t" style="left:550px;top:881px;width:74px;text-align:right;font-size:14px">3<span style="font-size:10px;margin-left:2px">番人気</span></div>
<div class="a" style="left:368px;top:901px;width:262px;height:1px;border-top:1px dashed #cfcfcf"></div>
<div class="a" style="left:368px;top:845px;width:1px;height:85px;background:#cfcfcf"></div>
<div class="a" style="left:444px;top:845px;width:1px;height:85px;background:#cfcfcf"></div>
<div class="a" style="left:550px;top:845px;width:1px;height:85px;background:#cfcfcf"></div>
<div class="a" style="left:630px;top:845px;width:1px;height:85px;background:#cfcfcf"></div>
<div class="a t" style="left:368px;top:909px;width:76px;text-align:center;font-size:14px">4-7</div>
<div class="a t" style="left:444px;top:909px;width:100px;text-align:right;font-size:14px">360<span style="font-size:11px">円</span></div>
<div class="a t" style="left:550px;top:909px;width:74px;text-align:right;font-size:14px">5<span style="font-size:10px;margin-left:2px">番人気</span></div>
<div class="a" style="left:317px;top:929px;width:313px;height:1px;background:#cfcfcf"></div>
<div class="a" style="left:630px;top:817px;width:52px;height:29px;background:#e8e8dd;border:1px solid #cfcfcf"><div class="c" style="height:27px;width:50px;font-size:13px;font-weight:bold;color:#444">馬連</div></div>
<div class="a" style="left:681px;top:817px;width:1px;height:29px;background:#cfcfcf"></div>
<div class="a" style="left:757px;top:817px;width:1px;height:29px;background:#cfcfcf"></div>
<div class="a" style="left:863px;top:817px;width:1px;height:29px;background:#cfcfcf"></div>
<div class="a" style="left:943px;top:817px;width:1px;height:29px;background:#cfcfcf"></div>
<div class="a t" style="left:681px;top:825px;width:76px;text-align:center;font-size:14px">1-7</div>
<div class="a t" style="left:757px;top:825px;width:100px;text-align:right;font-size:14px">300<span style="font-size:11px">円</span></div>
<div class="a t" style="left:863px;top:825px;width:74px;text-align:right;font-size:14px">1<span style="font-size:10px;margin-left:2px">番人気</span></div>
<div class="a" style="left:630px;top:845px;width:313px;height:1px;background:#cfcfcf"></div>
<div class="a" style="left:630px;top:845px;width:52px;height:29px;background:#e8e8dd;border:1px solid #cfcfcf"><div class="c" style="height:27px;width:50px;font-size:13px;font-weight:bold;color:#444">馬単</div></div>
<div class="a" style="left:681px;top:845px;width:1px;height:29px;background:#cfcfcf"></div>
<div class="a" style="left:757px;top:845px;width:1px;height:29px;background:#cfcfcf"></div>
<div class="a" style="left:863px;top:845px;width:1px;height:29px;background:#cfcfcf"></div>
<div class="a" style="left:943px;top:845px;width:1px;height:29px;background:#cfcfcf"></div>
<div class="a t" style="left:681px;top:853px;width:76px;text-align:center;font-size:14px">1-7</div>
<div class="a t" style="left:757px;top:853px;width:100px;text-align:right;font-size:14px">580<span style="font-size:11px">円</span></div>
<div class="a t" style="left:863px;top:853px;width:74px;text-align:right;font-size:14px">1<span style="font-size:10px;margin-left:2px">番人気</span></div>
<div class="a" style="left:630px;top:873px;width:313px;height:1px;background:#cfcfcf"></div>
<div class="a" style="left:630px;top:873px;width:52px;height:29px;background:#e8e8dd;border:1px solid #cfcfcf"><div class="c" style="height:27px;width:50px;font-size:13px;font-weight:bold;color:#444">3連複</div></div>
<div class="a" style="left:681px;top:873px;width:1px;height:29px;background:#cfcfcf"></div>
<div class="a" style="left:757px;top:873px;width:1px;height:29px;background:#cfcfcf"></div>
<div class="a" style="left:863px;top:873px;width:1px;height:29px;background:#cfcfcf"></div>
<div class="a" style="left:943px;top:873px;width:1px;height:29px;background:#cfcfcf"></div>
<div class="a t" style="left:681px;top:881px;width:76px;text-align:center;font-size:14px">1-4-7</div>
<div class="a t" style="left:757px;top:881px;width:100px;text-align:right;font-size:14px">550<span style="font-size:11px">円</span></div>
<div class="a t" style="left:863px;top:881px;width:74px;text-align:right;font-size:14px">2<span style="font-size:10px;margin-left:2px">番人気</span></div>
<div class="a" style="left:630px;top:901px;width:313px;height:1px;background:#cfcfcf"></div>
<div class="a" style="left:630px;top:901px;width:52px;height:29px;background:#e8e8dd;border:1px solid #cfcfcf"><div class="c" style="height:27px;width:50px;font-size:13px;font-weight:bold;color:#444">3連単</div></div>
<div class="a" style="left:681px;top:901px;width:1px;height:29px;background:#cfcfcf"></div>
<div class="a" style="left:757px;top:901px;width:1px;height:29px;background:#cfcfcf"></div>
<div class="a" style="left:863px;top:901px;width:1px;height:29px;background:#cfcfcf"></div>
<div class="a" style="left:943px;top:901px;width:1px;height:29px;background:#cfcfcf"></div>
<div class="a t" style="left:681px;top:909px;width:76px;text-align:center;font-size:14px">1-7-4</div>
<div class="a t" style="left:757px;top:909px;width:100px;text-align:right;font-size:14px">2,130<span style="font-size:11px">円</span></div>
<div class="a t" style="left:863px;top:909px;width:74px;text-align:right;font-size:14px">2<span style="font-size:10px;margin-left:2px">番人気</span></div>
<div class="a" style="left:630px;top:929px;width:313px;height:1px;background:#cfcfcf"></div>
<div class="a" style="left:943px;top:817px;width:1px;height:113px;background:#cfcfcf"></div></body></html>
